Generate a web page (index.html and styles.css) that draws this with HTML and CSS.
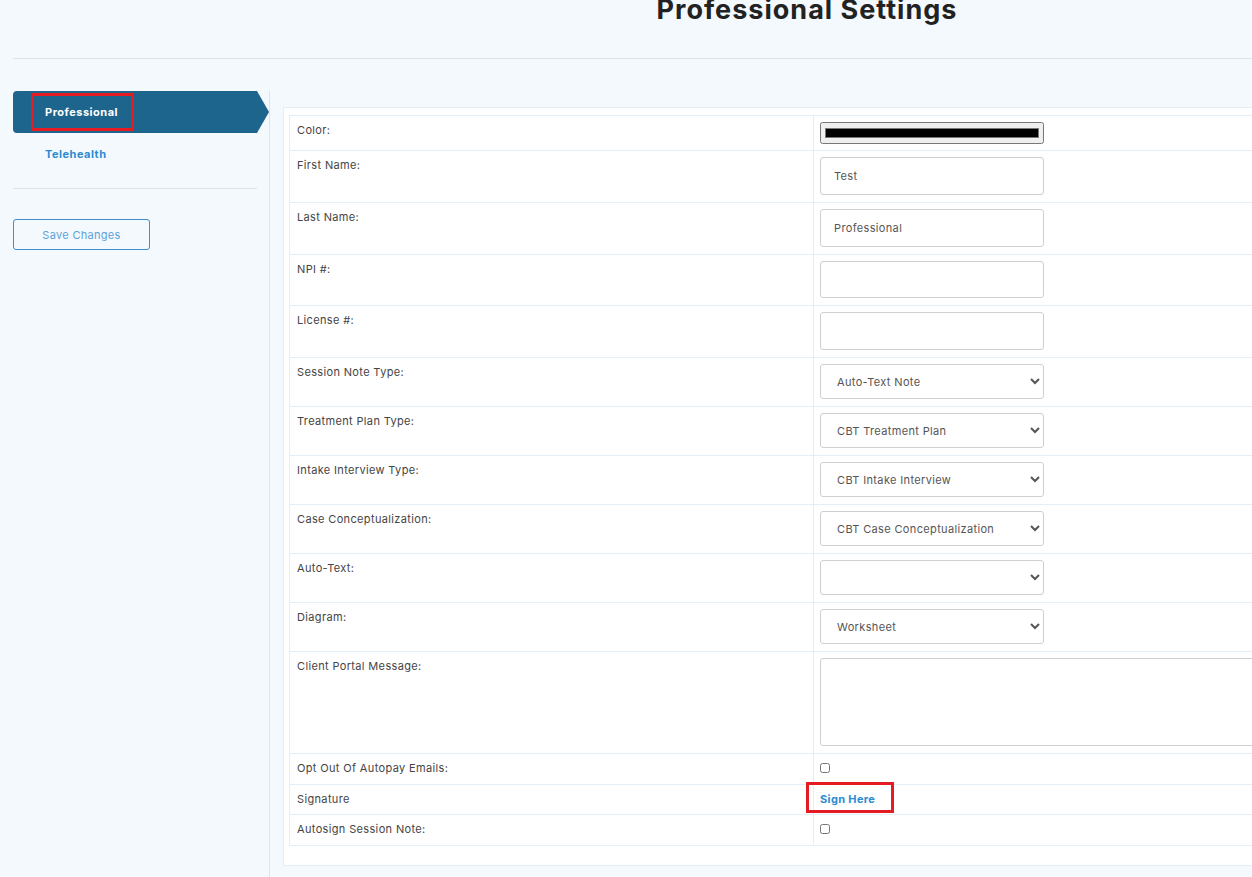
FILE: index.html
```html
<!DOCTYPE html>
<html>
<head>
<meta charset="utf-8">
<title>Professional Settings</title>
<link rel="stylesheet" href="styles.css">
</head>
<body>
<div class="page">
  <header class="header">
    <h1 class="title">Professional Settings</h1>
  </header>
  <div class="layout">
    <aside class="sidebar">
      <nav class="nav">
        <div class="nav-item active"><span class="mark">Professional</span></div>
        <div class="nav-item">Telehealth</div>
      </nav>
      <div class="side-actions">
        <button class="save-btn">Save Changes</button>
      </div>
    </aside>
    <main class="content">
      <div class="panel">
        <table class="form-table">
          <tr><td class="label">Color:</td><td class="value color-cell"><input class="color-input" type="color" value="#000000"></td></tr>
          <tr><td class="label">First Name:</td><td class="value"><input class="text-input" type="text" value="Test"></td></tr>
          <tr><td class="label">Last Name:</td><td class="value"><input class="text-input" type="text" value="Professional"></td></tr>
          <tr><td class="label">NPI #:</td><td class="value"><input class="text-input" type="text" value=""></td></tr>
          <tr><td class="label">License #:</td><td class="value"><input class="text-input" type="text" value=""></td></tr>
          <tr><td class="label">Session Note Type:</td><td class="value"><select class="select"><option>Auto-Text Note</option></select></td></tr>
          <tr><td class="label">Treatment Plan Type:</td><td class="value"><select class="select"><option>CBT Treatment Plan</option></select></td></tr>
          <tr><td class="label">Intake Interview Type:</td><td class="value"><select class="select"><option>CBT Intake Interview</option></select></td></tr>
          <tr><td class="label">Case Conceptualization:</td><td class="value"><select class="select"><option>CBT Case Conceptualization</option></select></td></tr>
          <tr><td class="label">Auto-Text:</td><td class="value"><select class="select"><option></option></select></td></tr>
          <tr><td class="label">Diagram:</td><td class="value"><select class="select"><option>Worksheet</option></select></td></tr>
          <tr><td class="label">Client Portal Message:</td><td class="value"><textarea class="textarea"></textarea></td></tr>
          <tr class="small-row"><td class="label">Opt Out Of Autopay Emails:</td><td class="value"><input class="check" type="checkbox"></td></tr>
          <tr class="small-row"><td class="label">Signature</td><td class="value"><span class="sign-wrap"><a class="sign-link" href="#">Sign Here</a><span class="sign-mark"></span></span></td></tr>
          <tr class="small-row"><td class="label">Autosign Session Note:</td><td class="value"><input class="check" type="checkbox"></td></tr>
        </table>
      </div>
    </main>
  </div>
</div>
</body>
</html>
```
FILE: styles.css
```css
html, body {
  margin: 0;
  padding: 0;
  background: #f4f9fd;
  overflow: hidden;
}
body {
  font-family: Inter, "Open Sans", sans-serif;
  color: #444;
  height: 877px;
}
.page {
  width: 1588px;
  padding-left: 13px;
}
.header {
  height: 58px;
  border-bottom: 1px solid #dde4eb;
  overflow: hidden;
}
.title {
  margin: -5px 0 0 0;
  text-align: center;
  font-size: 27px;
  line-height: 30px;
  font-weight: 700;
  letter-spacing: 1px;
  color: #222;
}
.layout {
  display: flex;
  margin-top: 32px;
  height: 800px;
}
.sidebar {
  width: 256px;
  flex: none;
  border-right: 1px solid #dde3ea;
}
.nav {
  border-bottom: 1px solid #dde4eb;
  width: 244px;
  padding-bottom: 13px;
}
.nav-item {
  height: 42px;
  display: flex;
  align-items: center;
  padding-left: 32px;
  font-size: 11px;
  font-weight: 700;
  letter-spacing: 0.5px;
  color: #2b8bd3;
}
.nav-item.active {
  width: 256px;
  box-sizing: border-box;
  padding-left: 18px;
  background: #1d658d;
  color: #fff;
  border-radius: 4px 0 0 4px;
  clip-path: polygon(0 0, 244px 0, 256px 50%, 244px 100%, 0 100%);
}
.mark {
  border: 3px solid #e41b23;
  padding: 8px 13px 8px 11px;
  line-height: 16px;
}
.side-actions {
  padding-top: 30px;
}
.save-btn {
  width: 137px;
  height: 31px;
  background: transparent;
  border: 1px solid #3f8dcc;
  border-radius: 3px;
  color: #5ca2da;
  font-family: Inter, "Open Sans", sans-serif;
  font-size: 11px;
  letter-spacing: 0.3px;
}
.content {
  flex: none;
  padding-left: 13px;
  padding-top: 16px;
}
.panel {
  width: 1300px;
  background: #fff;
  border: 1px solid #e5eef6;
  padding: 7px 5px 19px 5px;
}
.form-table {
  border-collapse: collapse;
  width: 100%;
}
.form-table td {
  border: 1px solid #e2eef8;
  vertical-align: top;
  font-size: 11px;
  line-height: 16px;
  letter-spacing: 0.35px;
}
.label {
  width: 509px;
  padding: 6px 7px;
  color: #444;
}
.value {
  padding: 6px 6px 7px 6px;
}
.value.color-cell {
  padding-bottom: 6px;
}
.text-input {
  display: block;
  box-sizing: border-box;
  width: 224px;
  height: 37.75px;
  border: 1px solid #cfcfcf;
  border-radius: 3px;
  padding: 0 13px;
  font-family: Inter, "Open Sans", sans-serif;
  font-size: 11px;
  letter-spacing: 0.35px;
  color: #555;
}
.select {
  display: block;
  box-sizing: border-box;
  width: 224px;
  height: 35px;
  border: 1px solid #cfcfcf;
  border-radius: 3px;
  padding: 0 12px;
  background: #fff;
  font-family: Inter, "Open Sans", sans-serif;
  font-size: 11px;
  letter-spacing: 0.35px;
  color: #555;
}
.color-input {
  display: block;
  box-sizing: border-box;
  width: 224px;
  height: 22px;
  margin: 0;
}
.textarea {
  display: block;
  box-sizing: border-box;
  width: 700px;
  height: 88px;
  border: 1px solid #cfcfcf;
  border-radius: 3px;
  resize: none;
}
.small-row .label,
.small-row .value {
  padding-top: 6px;
  padding-bottom: 7px;
}
.check {
  margin: 3px 0 0 0;
  width: 10px;
  height: 10px;
}
.sign-wrap {
  position: relative;
  display: inline-block;
}
.sign-link {
  font-weight: 700;
  color: #2b8bd3;
  text-decoration: none;
}
.sign-mark {
  position: absolute;
  left: -14px;
  top: -9px;
  width: 88px;
  height: 31px;
  box-sizing: border-box;
  border: 3px solid #e41b23;
}
```
